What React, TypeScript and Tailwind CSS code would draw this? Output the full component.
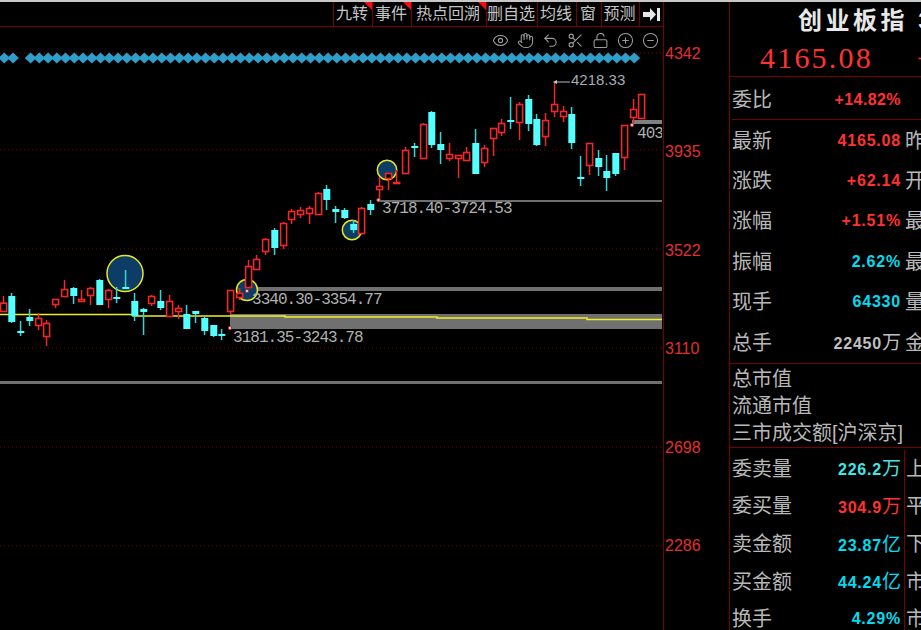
import { Eye, Hand, Undo2, Scissors, LockOpen, CirclePlus, CircleMinus } from "lucide-react"

type Candle = [number, number, number, number, "r" | "c"]

// high, body top, body bottom, low
const candles: Candle[] = [
    [296, 302.7, 311, 311, "r"],
    [293, 296, 322, 323, "c"],
    [321, 331, 333, 336, "c"],
    [309, 317, 321, 326, "c"],
    [313, 318, 325, 330, "r"],
    [320, 323, 336, 346, "r"],
    [299, 299, 304, 308, "r"],
    [280, 289, 296, 297, "r"],
    [287, 288, 296, 304, "c"],
    [290, 299, 301, 301, "r"],
    [287, 288, 295, 305, "r"],
    [279, 280, 305, 305, "c"],
    [289, 290, 299, 308, "r"],
    [287, 297, 298, 303, "c"],
    [270, 287, 289, 289, "c"],
    [293, 301, 316, 321, "c"],
    [308, 309, 312, 335, "c"],
    [295, 296, 303, 306, "r"],
    [290, 301, 308, 310, "c"],
    [295, 301, 316, 317, "r"],
    [305, 308, 311, 319, "r"],
    [305, 314, 329, 329, "c"],
    [311, 311, 314, 323, "c"],
    [317, 318, 331, 335, "c"],
    [325, 325, 336, 337, "c"],
    [329, 334, 335, 340, "c"],
    [290, 290, 311, 314, "r"],
    [288, 293, 297, 300, "r"],
    [260, 266, 287, 287, "r"],
    [255, 259, 269, 269, "r"],
    [238, 239, 251, 255, "r"],
    [228, 230, 248, 255, "c"],
    [222, 223, 245, 249, "r"],
    [209, 211, 219, 224, "r"],
    [207, 210, 214, 218, "r"],
    [206, 208, 213, 224, "r"],
    [192, 193, 214, 215, "r"],
    [185, 189, 200, 210, "c"],
    [206, 209, 212, 223, "c"],
    [208, 210, 218, 219, "c"],
    [220, 224, 230, 233, "c"],
    [207, 208, 233, 233, "r"],
    [200, 204, 210, 215, "c"],
    [177, 186, 189, 200, "r"],
    [173, 173, 178, 190, "r"],
    [170, 182, 183, 183, "r"],
    [147, 150, 173, 173, "r"],
    [143, 146, 148, 157, "c"],
    [123, 124, 158, 158, "r"],
    [111, 112, 145, 148, "c"],
    [132, 144, 150, 164, "c"],
    [143, 154, 158, 161, "r"],
    [155, 155, 158, 178, "r"],
    [147, 152, 160, 160, "r"],
    [129, 143, 174, 174, "c"],
    [145, 148, 162, 167, "r"],
    [128, 128, 138, 156, "r"],
    [119, 123, 132, 136, "r"],
    [97, 120, 122, 129, "c"],
    [102, 104, 122, 140, "r"],
    [95, 99, 124, 131, "c"],
    [114, 119, 145, 146, "c"],
    [113, 120, 136, 146, "r"],
    [82, 104, 111, 117, "r"],
    [106, 111, 116, 122, "r"],
    [107, 114, 143, 149, "c"],
    [156, 177, 178, 186, "c"],
    [143, 143, 165, 175, "r"],
    [150, 158, 167, 176, "c"],
    [155, 171, 178, 191, "c"],
    [153, 153, 174, 176, "c"],
    [125, 125, 157, 170, "r"],
    [99, 109, 117, 123, "r"],
    [94, 94, 118, 118, "r"],
]

const grid = [53, 150, 249, 348, 447, 546]
const axis = ["4342", "3935", "3522", "3110", "2698", "2286"]

const tools = [
    { label: "九转", w: "w-[39px]", flag: true },
    { label: "事件", w: "w-[39px]", flag: true },
    { label: "热点回溯", w: "w-[75px]", flag: true },
    { label: "删自选", w: "w-[51px]", flag: false },
    { label: "均线", w: "w-[39px]", flag: false },
    { label: "窗", w: "w-[25px]", flag: false },
    { label: "预测", w: "w-[38px]", flag: false },
]

const chartIcons = [Eye, Hand, Undo2, Scissors, LockOpen, CirclePlus, CircleMinus]

const cnFont = "font-['Liberation_Sans','Noto_Sans_CJK_SC',sans-serif]"
const monoLabel = "absolute font-['Liberation_Mono',monospace] text-[16px] leading-none tracking-[-0.96px] text-[#b0b0b0]"
const red = "text-[#ff3232]"
const cyan = "text-[#00dcf0]"

function Row({ label, value, color, unit, next, h, divided }: { label: string; value: string; color: string; unit?: string; next?: string; h: string; divided?: boolean }) {
    return (
        <div className={`flex items-center ${h}`}>
            <span className="w-[60px] shrink-0 whitespace-nowrap pl-[2px] text-[20px] leading-none text-[#b8b8b8]">{label}</span>
            <span className={`w-[111px] shrink-0 text-right text-[16px] font-bold leading-none tracking-[0.8px] ${color}`}>
                {value}
                {unit && <span className="text-[19px] font-normal tracking-normal">{unit}</span>}
            </span>
            {divided ? (
                <span className="ml-[3px] flex h-full items-center border-l border-[#7a0000] pl-[1px] text-[20px] leading-none text-[#b8b8b8]">{next}</span>
            ) : (
                <span className="ml-[4px] text-[20px] leading-none text-[#b8b8b8]">{next}</span>
            )}
        </div>
    )
}

function ChartDrawing() {
    return (
        <svg className="absolute inset-0" width="662" height="603" viewBox="0 27 662 603">
            {grid.map((y) => (
                <line key={y} x1="0" x2="662" y1={y} y2={y} stroke="#800000" strokeDasharray="1 3" />
            ))}

            <rect x="0" y="381" width="662" height="3" fill="#707070" />
            <rect x="380" y="200" width="282" height="2" fill="#707070" />
            <rect x="250" y="287" width="412" height="4" fill="#707070" />
            <rect x="230" y="314" width="432" height="15" fill="#707070" />
            <rect x="632" y="120" width="30" height="4" fill="#808080" />
            <polyline points="0,314.5 133,314.5 133,316 285,316 285,317 437,317 437,318 587,318 587,319.5 662,319.5" fill="none" stroke="#f0f020" strokeWidth="1.6" />

            {Array.from({ length: 73 }).map((_, i) =>
                i === 2 ? null : (
                    <polygon key={i} points={`${4.3 + i * 8.75 - 5.8},58 ${4.3 + i * 8.75},52.5 ${4.3 + i * 8.75 + 5.8},58 ${4.3 + i * 8.75},63.5`} fill="#2f9fca" />
                )
            )}

            {[[125, 273.5, 18], [247, 290, 10.5], [352, 230, 9.7], [387, 170, 9.7]].map(([x, y, r]) => (
                <circle key={x} cx={x} cy={y} r={r} fill="#0d3d66" stroke="#e8e820" strokeWidth="1.5" />
            ))}

            {candles.map(([high, top, bottom, low, kind], i) => {
                const x = Math.round(2.67 + i * 8.75)
                const stroke = kind === "r" ? "#f02828" : "#30d8d8"
                return (
                    <g key={i}>
                        <rect x={x - 0.2} y={high} width="1.5" height={low - high} fill={stroke} />
                        {kind === "r" ? (
                            <rect x={x - 2.4} y={top + 0.5} width="6" height={bottom - top} fill="#000" stroke="#f02828" strokeWidth="1.6" />
                        ) : (
                            <rect x={x - 2.7} y={top} width="7" height={Math.max(bottom - top, 2)} fill="#54ffff" />
                        )}
                    </g>
                )
            })}

            {[[230, 328], [247, 291], [378.5, 200], [632, 125]].map(([x, y]) => (
                <circle key={x} cx={x} cy={y} r="1.7" fill="#e8c8c8" stroke="#b03030" />
            ))}
            <path d="M570 82H557" stroke="#9a9a9a" strokeWidth="1.2" />
            <path d="M553 82l4-2v4z" fill="#c8c8c8" />
        </svg>
    )
}

export default function App() {
    return (
        <div className={`flex h-[630px] w-[921px] flex-col overflow-hidden bg-black ${cnFont}`}>
            <div className="h-[2px] shrink-0 bg-[#c8c8c8]" />
            <div className="flex min-h-0 flex-1">
                <div className="flex w-[664px] shrink-0 flex-col border-r border-[#7a0000]">
                    <div className="flex h-[25px] shrink-0 justify-end border-b border-[#7a0000]">
                        {tools.map((t) => (
                            <div key={t.label} className={`relative flex ${t.w} shrink-0 items-center justify-center border-l border-[#7a0000] pr-[2px] text-[16px] leading-none text-[#c4c4c4]`}>
                                {t.label}
                                {t.flag && <div className="absolute right-0 top-0 h-[8px] w-[8px] bg-[#f01010] [clip-path:polygon(0_0,100%_0,100%_100%)]" />}
                            </div>
                        ))}
                        <div className="flex w-[24px] shrink-0 items-center justify-center border-l border-[#7a0000]">
                            <svg width="17" height="13" viewBox="0 0 17 13" fill="#e8e8e8">
                                <path d="M0 4h7V0l6 6.5-6 6.5V9H0z" />
                                <rect x="14" y="0" width="3" height="13" />
                            </svg>
                        </div>
                    </div>
                    <div className="relative min-h-0 flex-1">
                        <ChartDrawing />
                        <div className="relative flex h-[26px] justify-end">
                            {chartIcons.map((Icon, i) => (
                                <div key={i} className="flex w-[25px] items-center justify-center text-[#9c9c9c]">
                                    <Icon size={17} strokeWidth={1.5} />
                                </div>
                            ))}
                        </div>
                        <span className="absolute left-[571px] top-[45px] text-[15px] leading-none text-[#a4acb4]">4218.33</span>
                        <span className={`${monoLabel} left-[637px] top-[99px] w-[25px] overflow-hidden`}>4033</span>
                        <span className={`${monoLabel} left-[382px] top-[174px]`}>3718.40-3724.53</span>
                        <span className={`${monoLabel} left-[252px] top-[265px]`}>3340.30-3354.77</span>
                        <span className={`${monoLabel} left-[233px] top-[303px]`}>3181.35-3243.78</span>
                    </div>
                </div>

                <div className="flex w-[65px] shrink-0 flex-col pt-[41.5px] pl-[1px]">
                    {axis.map((a) => (
                        <div key={a} className="flex h-[98.6px] shrink-0 items-start text-[16px] leading-[20px] text-[#e03030]">{a}</div>
                    ))}
                </div>

                <div className="min-w-0 flex-1 overflow-hidden border-l border-[#7a0000]">
                    <div className="h-[75px] border-b border-[#7a0000]">
                        <div className="flex h-[37px] items-center whitespace-nowrap pl-[68px] text-[24px] font-bold leading-none tracking-[3.5px] text-[#e8e8e8]">创业板指 399006</div>
                        <div className="flex h-[37px] items-center whitespace-nowrap pl-[30px] font-['Liberation_Serif',serif] text-[30px] leading-none tracking-[2.2px] text-[#ff3232]">
                            4165.08
                            <span className="ml-[44px]">+62.14</span>
                        </div>
                    </div>
                    <div className="ml-[2px] flex h-[43px] items-center border-b border-[#7a0000] pt-[3px]">
                        <span className="w-[58px] shrink-0 text-[20px] leading-none text-[#b8b8b8]">委比</span>
                        <span className={`w-[111px] shrink-0 text-right text-[16px] font-bold leading-none tracking-[0.4px] ${red}`}>+14.82%</span>
                    </div>
                    <div className="border-b border-[#7a0000] pt-[0.5px]">
                        <Row h="h-[40.4px]" label="最新" value="4165.08" color={red} next="昨" />
                        <Row h="h-[40.4px]" label="涨跌" value="+62.14" color={red} next="开" />
                        <Row h="h-[40.4px]" label="涨幅" value="+1.51%" color={red} next="最" />
                        <Row h="h-[40.4px]" label="振幅" value="2.62%" color={cyan} next="最" />
                        <Row h="h-[40.4px]" label="现手" value="64330" color={cyan} next="量" />
                        <Row h="h-[40.4px]" label="总手" value="22450" unit="万" color="text-[#c0c0c0]" next="金" />
                    </div>
                    <div className="flex flex-col border-b border-[#7a0000] pt-[1px] pl-[2px] text-[20px] leading-none text-[#b8b8b8]">
                        <div className="flex h-[27.5px] items-center">总市值</div>
                        <div className="flex h-[27.5px] items-center">流通市值</div>
                        <div className="flex h-[27px] items-center whitespace-nowrap">三市成交额[沪深京]</div>
                    </div>
                    <div className="pt-[2px]">
                        <Row divided h="h-[37.7px]" label="委卖量" value="226.2" unit="万" color="text-[#40e8e8]" next="上" />
                        <Row divided h="h-[37.7px]" label="委买量" value="304.9" unit="万" color={red} next="平" />
                        <Row divided h="h-[37.7px]" label="卖金额" value="23.87" unit="亿" color={cyan} next="下" />
                        <Row divided h="h-[37.7px]" label="买金额" value="44.24" unit="亿" color={cyan} next="市" />
                        <Row divided h="h-[37.7px]" label="换手" value="4.29%" color={cyan} next="市" />
                    </div>
                </div>
            </div>
        </div>
    )
}
